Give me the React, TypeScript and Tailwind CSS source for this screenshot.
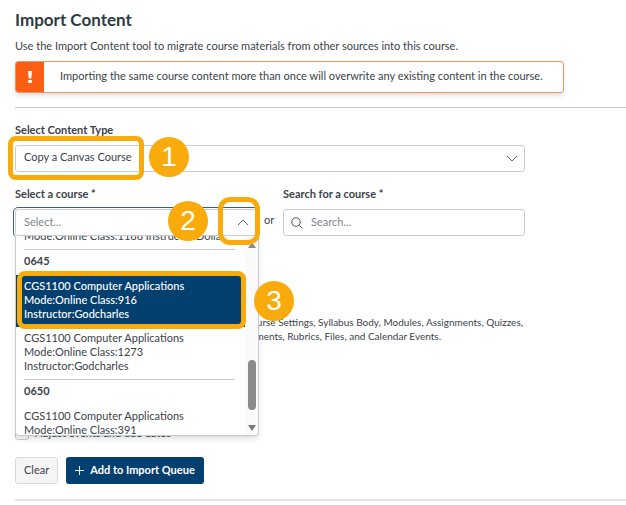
import type { ReactNode } from "react";

type Course = {
  title: string;
  mode: string;
  instructor: string;
  selected?: boolean;
};

type Term = {
  code: string;
  courses: Course[];
};

const terms: Term[] = [
  {
    code: "0645",
    courses: [
      {
        title: "CGS1100 Computer Applications",
        mode: "Mode:Online Class:916",
        instructor: "Instructor:Godcharles",
        selected: true,
      },
      {
        title: "CGS1100 Computer Applications",
        mode: "Mode:Online Class:1273",
        instructor: "Instructor:Godcharles",
      },
    ],
  },
  {
    code: "0650",
    courses: [
      {
        title: "CGS1100 Computer Applications",
        mode: "Mode:Online Class:391",
        instructor: "Instructor:Godcharles",
      },
    ],
  },
];

const Step = ({ children, className }: { children: ReactNode; className: string }) => (
  <span
    className={`absolute z-30 flex size-10 items-center justify-center rounded-full bg-[#f9ab0c] font-['Liberation_Sans',sans-serif] text-[28px] leading-none text-white ${className}`}>
    {children}
  </span>
);

const Highlight = ({ className }: { className: string }) => (
  <span
    aria-hidden="true"
    className={`pointer-events-none absolute z-20 border-[#f9ab0c] ${className}`}
  />
);

const CourseOption = ({ course }: { course: Course }) => (
  <li
    role="option"
    aria-selected={!!course.selected}
    className={`relative pt-1 pb-1.5 pl-2 leading-[14px] ${
      course.selected ? "bg-[#03406f] font-medium text-white" : ""
    }`}>
    <p>{course.title}</p>
    <p>{course.mode}</p>
    <p>{course.instructor}</p>
    {course.selected && (
      <>
        <Highlight className="-top-1 -right-px -bottom-0.5 left-px rounded-lg border-5" />
        <Step className="top-1.5 left-[238px]">3</Step>
      </>
    )}
  </li>
);

const CourseList = () => (
  <div className="absolute top-full -right-0.5 left-0 z-10 h-[200px] rounded-b border border-t-0 border-[#c7cdd1] bg-white shadow-md [clip-path:inset(0_-50px_-10px_-10px)]">
    <div className="flex h-full [clip-path:inset(0_-50px_0_0)]">
      <ul
        id="course-list"
        role="listbox"
        aria-label="Select a course"
        className="-mt-[7px] min-w-0 flex-1">
        <li
          role="option"
          aria-selected={false}
          className="pb-1.5 pl-2 leading-[14px] whitespace-nowrap">
          Mode:Online Class:1188 Instructor:Dollar
        </li>
        {terms.map((term) => (
          <li key={term.code} role="group" aria-label={term.code}>
            <hr className="mr-2.5 ml-2 border-[#c7cdd1]" />
            <p className="pt-0.5 pb-1.5 pl-2 leading-[17px] font-bold">{term.code}</p>
            <ul>
              {term.courses.map((course) => (
                <CourseOption key={course.mode} course={course} />
              ))}
            </ul>
          </li>
        ))}
      </ul>
      <div
        aria-hidden="true"
        className="flex w-[13px] flex-col items-center rounded-br bg-[#fafafa] pt-1.5 pb-1">
        <svg viewBox="0 0 8 6" className="h-1.5 w-2 fill-[#8a8a8a]">
          <path d="M4 0 8 6H0Z" />
        </svg>
        <div className="mt-28 h-[50px] w-2 rounded-full bg-[#8b8b8b]" />
        <svg viewBox="0 0 8 6" className="mt-auto h-1.5 w-2 fill-[#7a7a7a]">
          <path d="M0 0h8L4 6Z" />
        </svg>
      </div>
    </div>
  </div>
);

export default function App() {
  return (
    <main className="bg-white pl-[15px] font-[Lato,sans-serif] text-[11px] text-[#3b4248]">
      <h1 className="pt-2 text-[17px] leading-6 font-bold text-[#2d3b45]">Import Content</h1>
      <p className="mt-1.5 leading-4">
        Use the Import Content tool to migrate course materials from other sources into this course.
      </p>

      <div
        role="alert"
        className="mt-[7px] flex min-h-8 max-w-[549px] overflow-hidden rounded-[3px] border border-[#e8976c] shadow-md">
        <div className="flex w-7 items-center justify-center bg-[#fc5e13]">
          <svg viewBox="0 0 6 14" className="h-3.5 w-1.5 fill-white">
            <path d="M1 1h4l-.7 7.5H1.7ZM1.2 10h3.6v3H1.2Z" />
          </svg>
        </div>
        <p className="pt-1.5 pl-4 leading-4">
          Importing the same course content more than once will overwrite any existing content in the
          course.
        </p>
      </div>

      <hr className="mt-3.5 border-[#c7cdd1]" />

      <form className="max-w-[510px]">
        <label htmlFor="content-type" className="mt-3.5 block leading-4 font-bold">
          Select Content Type
        </label>
        <div className="relative mt-[7px]">
          <select
            id="content-type"
            className="block h-[27px] w-full appearance-none rounded-[3px] border border-[#c7cdd1] bg-white pb-0.5 pl-2">
            <option>Copy a Canvas Course</option>
          </select>
          <svg
            viewBox="0 0 12 7"
            className="pointer-events-none absolute top-2.5 right-[7px] h-[7px] w-3 fill-none stroke-[#5d6770]">
            <path d="m1 1 5 5 5-5" />
          </svg>
          <Highlight className="-top-[9px] -left-[7px] h-11 w-[136px] rounded-lg border-5" />
          <Step className="-top-2 left-[134px]">1</Step>
        </div>

        <div className="mt-3.5 grid grid-cols-[242px_26px_1fr]">
          <div>
            <label htmlFor="course" className="block leading-4 font-bold">
              Select a course *
            </label>
            <div className="relative mt-[7px]">
              <input
                id="course"
                type="text"
                role="combobox"
                aria-expanded="true"
                aria-controls="course-list"
                placeholder="Select..."
                className="block h-[27px] w-full rounded-[3px] border border-[#c7cdd1] bg-white px-2 pb-0.5 outline outline-offset-1 outline-[#35617f] placeholder:text-[#7d868c]"
              />
              <svg
                viewBox="0 0 12 7"
                className="absolute top-2.5 right-2 h-[7px] w-3 fill-none stroke-[#5d6770]">
                <path d="m1 6 5-5 5 5" />
              </svg>
              <CourseList />
              <Highlight className="-top-3 -right-[3px] h-12 w-[42px] rounded-xl border-5" />
              <Step className="-top-2 left-[153px]">2</Step>
            </div>
          </div>
          <span className="mt-[22px] pl-[7px] leading-6">or</span>
          <div>
            <label htmlFor="search" className="block leading-4 font-bold">
              Search for a course *
            </label>
            <div className="relative mt-[7px]">
              <input
                id="search"
                type="text"
                placeholder="Search..."
                className="block h-[27px] w-full rounded-[3px] border border-[#c7cdd1] bg-white pb-0.5 pl-[27px] placeholder:text-[#7d868c]"
              />
              <svg
                viewBox="0 0 12 12"
                className="absolute top-2 left-2 size-3 fill-none stroke-[#4d565d]">
                <circle cx="5" cy="5" r="4.3" />
                <path d="m8.2 8.2 3.3 3.3" />
              </svg>
            </div>
          </div>
        </div>

        <p className="mt-[79px] text-right text-[10px] leading-[14px] whitespace-nowrap">
          <span className="block pr-0.5">
            Course Settings, Syllabus Body, Modules, Assignments, Quizzes,
          </span>
          <span className="block pr-[84px]">
            Announcements, Rubrics, Files, and Calendar Events.
          </span>
        </p>

        <label className="mt-[82px] flex items-center gap-1.5 leading-4">
          <input
            type="checkbox"
            className="size-3.5 appearance-none rounded-[3px] border border-[#c7cdd1] bg-white"
          />
          Adjust events and due dates
        </label>

        <div className="mt-4 flex gap-2">
          <button
            type="button"
            className="h-[27px] rounded-[3px] border border-[#d9dcde] bg-[#f5f5f5] px-2">
            Clear
          </button>
          <button
            type="button"
            className="flex h-[27px] items-center gap-1.5 rounded-[3px] bg-[#03406f] px-[9px] font-bold text-white">
            <svg viewBox="0 0 9 9" className="size-[9px] fill-none stroke-white">
              <path d="M4.5 0v9M0 4.5h9" />
            </svg>
            Add to Import Queue
          </button>
        </div>
      </form>

      <hr className="mt-[15px] border-t-2 border-[#e3e5e6]" />
    </main>
  );
}
